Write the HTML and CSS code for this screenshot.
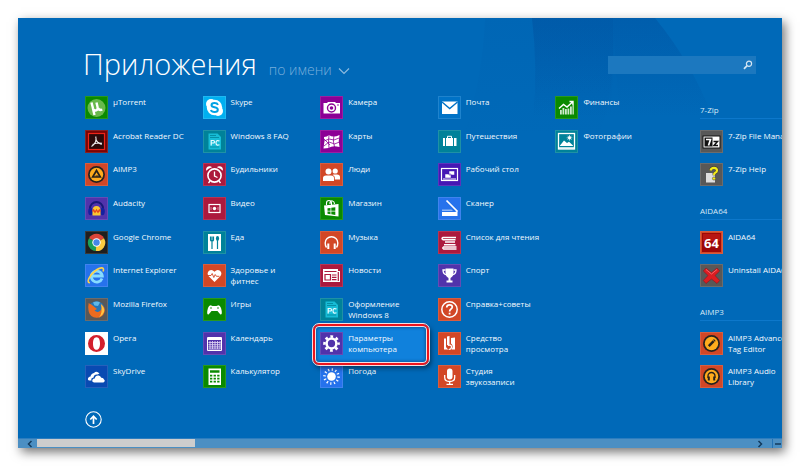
FILE: index.html
```html
<!DOCTYPE html>
<html lang="ru">
<head>
  <meta charset="UTF-8">
  <meta name="viewport" content="width=device-width, initial-scale=1">
  <title>Приложения</title>
  <link rel="stylesheet" href="styles.css">
</head>
<body>
  <div class="screen">
    <svg class="wallpaper" viewBox="0 0 764 430" preserveAspectRatio="xMidYMin slice" aria-hidden="true">
      <defs>
        <linearGradient id="fade" x1="0" y1="0" x2="0" y2="1">
          <stop offset="0" stop-color="#004a98" stop-opacity=".3"/>
          <stop offset="1" stop-color="#004a98" stop-opacity="0"/>
        </linearGradient>
      </defs>
      <path d="M467 0H595Q599 70 580 120H445Q465 60 467 0Z" fill="url(#fade)" opacity=".3"/>
      <path d="M514 0H637Q674 45 695 100H515Q520 50 514 0Z" fill="url(#fade)"/>
      <path d="M514 0H595Q596 60 592 100H515Q520 50 514 0Z" fill="url(#fade)" opacity=".5"/>
      <path d="M595 0H637Q674 45 695 100H602Q597 50 595 0Z" fill="url(#fade)" opacity=".3"/>
    </svg>

    <header class="header">
      <h1 class="title">Приложения</h1>
      <div class="sort">
        <select class="sort-select" aria-label="Сортировка">
          <option>по имени</option>
        </select>
        <svg class="chevron" viewBox="0 0 12 8" aria-hidden="true"><path d="M1 1.5 6 6.5 11 1.5" fill="none" stroke="#8dbbdf" stroke-width="1.2"/></svg>
      </div>
      <form class="search">
        <input class="search-input" type="text" aria-label="Поиск">
        <button class="search-btn" type="button" aria-label="Найти">
          <svg viewBox="0 0 10 10" aria-hidden="true"><circle cx="6" cy="3.8" r="2.6" fill="none" stroke="#d4e5f3" stroke-width="1.2"/><path d="M4.1 5.7 1 8.8" stroke="#d4e5f3" stroke-width="1.7"/></svg>
        </button>
      </form>
    </header>

    <main class="content">
      <nav class="apps" aria-label="Приложения">
        <a class="app" href="#"><span class="icon green"><svg viewBox="0 0 23 23"><circle cx="11.5" cy="12" r="9" fill="#69b94c"/><path d="M6.500 6.500 8 12.500q.8 2.500 3.200 1.800 2-.700 1.400-3L11.500 6.500M12.600 11.500q1.200 3.200 4.700 2.200M7.800 12 9.500 19" fill="none" stroke="#fff" stroke-width="2.400"/></svg></span><span class="label">µTorrent</span></a>
        <a class="app" href="#"><span class="icon maroon"><svg viewBox="0 0 23 23"><rect x="3.500" y="3.500" width="16" height="16" fill="#2b0a0a" stroke="#ee2418" stroke-width="1.200"/><path d="M10.700 6.500q1 3-.2 5.500T6.500 16.500M10.700 9q1.500 4 6 5.500M7.500 14.500q4-2 9.500-1.300" fill="none" stroke="#eee" stroke-width="1.100"/></svg></span><span class="label">Acrobat Reader DC</span></a>
        <a class="app" href="#"><span class="icon orange"><svg viewBox="0 0 23 23"><circle cx="11.500" cy="11.500" r="8.500" fill="#282320"/><circle cx="11.500" cy="11.500" r="6.700" fill="#ffac1d"/><path d="M11.500 7.500 15.300 14H7.700Z" fill="none" stroke="#28211b" stroke-width="1.700"/><path d="M10.500 13h3" stroke="#28211b"/></svg></span><span class="label">AIMP3</span></a>
        <a class="app" href="#"><span class="icon purple"><svg viewBox="0 0 23 23"><path d="M5 14V11.500a6.500 6.500 0 0 1 13 0V14" fill="none" stroke="#171879" stroke-width="2"/><ellipse cx="5.500" cy="14.500" rx="2.300" ry="3.700" fill="#1420a0"/><ellipse cx="17.500" cy="14.500" rx="2.300" ry="3.700" fill="#1420a0"/><path d="M7.500 18.500v-5q0-4.500 4-4.500t4 4.500v5Z" fill="#fbc832"/><path d="M7.500 14.500 8.700 13 10 15.300 11.500 13 13 15.300 14.300 13 15.500 14.500" fill="none" stroke="#e8431f" stroke-width="1.300"/></svg></span><span class="label">Audacity</span></a>
        <a class="app" href="#"><span class="icon black"><svg viewBox="0 0 23 23"><path d="M11.500 11.500 4 7.200A8.500 8.500 0 0 1 19 7.200Z" fill="#dc4539"/><path d="M11.500 11.500 4 7.200A8.500 8.500 0 0 0 10.800 20Z" fill="#1b9f59"/><path d="M11.500 11.500 19 7.200A8.500 8.500 0 0 1 10.800 20Z" fill="#fccb40"/><circle cx="11.500" cy="11.500" r="4.200" fill="#fff"/><circle cx="11.500" cy="11.500" r="3.200" fill="#4687e8"/></svg></span><span class="label">Google Chrome</span></a>
        <a class="app" href="#"><span class="icon blue"><svg viewBox="0 0 23 23"><path d="M17 14.500A5.500 5.500 0 1 1 17.300 12H7.500" fill="none" stroke="#86dbff" stroke-width="2.800"/><path d="M5 18.500C1 19.500 4 11.500 10 7S20 3 18 7.500" fill="none" stroke="#fbd14a" stroke-width="1.600"/></svg></span><span class="label">Internet Explorer</span></a>
        <a class="app" href="#"><span class="icon gray"><svg viewBox="0 0 23 23"><circle cx="11.500" cy="11.200" r="8" fill="#2576b7"/><path d="M8 4.500q4-2 7 0L13 8 9.500 7.500Z" fill="#60b8e8"/><path d="M3.700 5q1 1 2.300 1.300L9.500 9 12 11l-2.500 1.500q2.500 2.500 5.500.5 3-2.500.500-7Q21 9 19.500 14a8.200 8.200 0 0 1-15.800-.5Q2.700 9 3.700 5Z" fill="#ed6b1e"/><path d="M16 6q4 4 3 8-1.500 4-5 5.500 4-5 2-13.500Z" fill="#ffc540"/></svg></span><span class="label">Mozilla Firefox</span></a>
        <a class="app" href="#"><span class="icon white"><svg viewBox="0 0 23 23"><path fill-rule="evenodd" d="M11.500 3a8.500 8.500 0 1 0 0 17 8.500 8.500 0 1 0 0-17ZM11.500 5.200c2.500 0 3.500 2.800 3.500 6.300s-1 6.300-3.500 6.300S8 15 8 11.500s1-6.300 3.500-6.300Z" fill="#d3202d"/></svg></span><span class="label">Opera</span></a>
        <a class="app" href="#"><span class="icon navy"><svg viewBox="0 0 23 23"><path d="M4 15.500Q2 14.500 3.500 12.500 4.500 11.500 5.500 11.500 6 8.500 9 8q2.500-2.500 5.500.5l-2 1Q9 9 8.500 12.500 5.500 13 6.500 15.500Z" fill="#fff"/><path d="M9 17.500q-2.500-.5-1.500-2.700.7-1.300 2.200-1.300.8-3.500 4-2.900 1.800.3 2.500 2.200 2.300-.3 2.600 1.500 1.500.7.700 2.200-.5 1-1.500 1Z" fill="#fff"/></svg></span><span class="label">SkyDrive</span></a>

        <a class="app" href="#"><span class="icon skype"><svg viewBox="0 0 23 23"><circle cx="8" cy="8" r="5" fill="#fff"/><circle cx="15" cy="15" r="5" fill="#fff"/><circle cx="11.500" cy="11.500" r="7.700" fill="#fff"/><path d="M15 8.800Q14.200 7 11.500 7 8.500 7 8.500 9.200q0 1.500 3 2.100 3.300.7 3.300 2.400 0 2.300-3.200 2.300-3 0-3.700-2" fill="none" stroke="#00a2e4" stroke-width="2"/></svg></span><span class="label">Skype</span></a>
        <a class="app" href="#"><span class="icon teal"><svg viewBox="0 0 23 23"><path d="M5.500 3.500h9l3.500 3.500v12.500h-12.500Z" fill="#17bcd6"/><path d="M7 5.500h6M7 7.500h9M7 17h9" stroke="#058fa6"/><path d="M8.200 15.500V10.500h2q1.300 0 1.300 1.300T10.200 13H8.200M16.500 11q-3.500-1.500-3.500 1.800 0 3.300 3.500 1.900" fill="none" stroke="#e8fbff" stroke-width="1.200"/></svg></span><span class="label">Windows 8 FAQ</span></a>
        <a class="app" href="#"><span class="icon crimson"><svg viewBox="0 0 23 23"><circle cx="11.500" cy="12.500" r="6.600" fill="none" stroke="#fff" stroke-width="1.600"/><path d="M11.500 8.500v4.500l3 1.500M7 18l-1.500 2M16 18l1.500 2" fill="none" stroke="#fff" stroke-width="1.300"/><path d="M3.200 7.700Q2.500 4 6 3.200q2.200-.2 3 1Q5 5.300 3.200 7.700ZM19.800 7.700Q20.500 4 17 3.200q-2.200-.2-3 1Q18 5.300 19.800 7.700Z" fill="#fff"/></svg></span><span class="label">Будильники</span></a>
        <a class="app" href="#"><span class="icon crimson"><svg viewBox="0 0 23 23"><rect x="6" y="7.500" width="11" height="8" fill="none" stroke="#fff" stroke-width="1.200"/><circle cx="11.500" cy="11.500" r="1.700" fill="#fff"/><path d="M8 10v3M15 10v3" stroke="#e9b8c4" stroke-width=".7"/></svg></span><span class="label">Видео</span></a>
        <a class="app" href="#"><span class="icon teal"><svg viewBox="0 0 23 23"><rect x="5" y="3" width="13" height="17" fill="#fff"/><path d="M7.500 5.500v3.500q0 1 1.500 1v8M10.500 5.500v3.500q0 1-1.500 1M9 5.500v5M14.500 9v9" fill="none" stroke="#008299" stroke-width="1.200"/><ellipse cx="14.500" cy="7.500" rx="1.600" ry="2.400" fill="#008299"/></svg></span><span class="label">Еда</span></a>
        <a class="app" href="#"><span class="icon orange"><svg viewBox="0 0 23 23"><path d="M11.500 18 5.500 12Q3.500 9 6 6.800q3-1.800 5.500 1 2.500-2.800 5.500-1Q19.500 9 17.500 12Z" fill="#fff"/><path d="M4 11.500h4l1.200-2 1.600 4 1.400-3 1.200 1.800h3" fill="none" stroke="#d24726" stroke-width=".9"/></svg></span><span class="label">Здоровье и<br>фитнес</span></a>
        <a class="app" href="#"><span class="icon green"><svg viewBox="0 0 23 23"><path d="M7.500 7.200 9.500 8h4l2-.8q1.500 0 2.500 2.800.8 2.500.8 5 0 2-1.600 1.200-1.600-1.600-2.700-3.200H8.500Q7.400 14.600 5.800 16.200 4.200 17 4.200 15q0-2.500.8-5 1-2.800 2.500-2.800Z" fill="#fff"/><circle cx="8" cy="10" r=".8" fill="#0a8a00"/><circle cx="15" cy="10" r=".8" fill="#0a8a00"/></svg></span><span class="label">Игры</span></a>
        <a class="app" href="#"><span class="icon purple"><svg viewBox="0 0 23 23"><path d="M4.500 5.500h14v13h-14Z" fill="none" stroke="#fff"/><path d="M4.500 7h14" stroke="#fff" stroke-width="2"/><path d="M7 9v8M9.500 9v8M12 9v8M14.500 9v8M17 9v8M5.500 10.500h12M5.500 12.700h12M5.500 14.900h12M5.500 17h12" stroke="#d9cff0" stroke-width=".9"/></svg></span><span class="label">Календарь</span></a>
        <a class="app" href="#"><span class="icon green"><svg viewBox="0 0 23 23"><rect x="5.500" y="3.500" width="12.500" height="16.500" fill="#fff"/><path d="M7 6.500h9.500" stroke="#0a8a00" stroke-width="2.500"/><path d="M7 10.700h9.500M7 13.700h9.500M7 16.700h9.500" stroke="#0a8a00" stroke-width="1.700" stroke-dasharray="2.300 1.300"/></svg></span><span class="label">Калькулятор</span></a>

        <a class="app" href="#"><span class="icon magenta"><svg viewBox="0 0 23 23"><path d="M3.500 7h4V6h8v1h4.500v10.500h-16.500Z" fill="#fff"/><circle cx="11.500" cy="12" r="4" fill="none" stroke="#8c0095" stroke-width="1.400"/><circle cx="11.500" cy="12" r="1.800" fill="#8c0095"/><circle cx="18" cy="9" r=".8" fill="#8c0095"/></svg></span><span class="label">Камера</span></a>
        <a class="app" href="#"><span class="icon magenta"><svg viewBox="0 0 23 23"><path d="M4 7q3 0 5-2 4 3 10.500 0-1.500 6 0 12-7-2-11 1-2 0-5 .5Q5 12 4 7Z" fill="#fff"/><path d="M9 5q-1 6 0 13M14 5q-1.500 6 .5 12M4 11l5-2 5 1 5-2M4 16l5-4 5.500 2 5-2M4 9l6 6" fill="none" stroke="#8c0095" stroke-width=".8"/></svg></span><span class="label">Карты</span></a>
        <a class="app" href="#"><span class="icon orange"><svg viewBox="0 0 23 23"><circle cx="8.500" cy="8.500" r="3" fill="#fff"/><path d="M3 18v-3q0-2.500 3-2.500h5q3 0 3 2.500v3Z" fill="#fff"/><circle cx="15.200" cy="8" r="2.600" fill="#fff"/><path d="M14.800 16.500v-2q0-2-2.300-2.500l1-.5h3.500q3 0 3 2.500v2.500Z" fill="#fff"/></svg></span><span class="label">Люди</span></a>
        <a class="app" href="#"><span class="icon green"><svg viewBox="0 0 23 23"><path d="M4 8.500 18.500 7v12.500L5 18Z" fill="#fff"/><path d="M6.500 8V6q0-2.500 2.500-2.500T11.500 6v2M10 7V5.500q.5-2 2.500-1.500T14.500 7" fill="none" stroke="#fff" stroke-width="1.100"/><path d="m7.500 11.300 3-.4v2.800h-3ZM11.300 10.800l4-.6v3.500h-4ZM7.500 14.400h3v2.800l-3-.4ZM11.300 14.400h4v3.500l-4-.6Z" fill="#0a8a00"/></svg></span><span class="label">Магазин</span></a>
        <a class="app" href="#"><span class="icon orange"><svg viewBox="0 0 23 23"><path d="M6.500 16.500q-1.300-1.500-1.300-4.500a6.300 6.300 0 0 1 12.600 0q0 3-1.300 4.500" fill="none" stroke="#fff" stroke-width="1.400"/><path d="M8.300 12.500v5.500M14.700 12.500v5.500" stroke="#fff" stroke-width="2"/></svg></span><span class="label">Музыка</span></a>
        <a class="app" href="#"><span class="icon crimson"><svg viewBox="0 0 23 23"><path d="M3 5h15v2h2v11H3Z" fill="#fff"/><path d="M4.500 7.500h12M5 10.500h5.500v5.500H5ZM12 11h4.500M12 13.300h4.500M12 15.600h4.500M18.300 8v9" fill="none" stroke="#ac193d" stroke-width="1.200"/></svg></span><span class="label">Новости</span></a>
        <a class="app" href="#"><span class="icon teal"><svg viewBox="0 0 23 23"><path d="M5.500 3.500h9l3.500 3.500v12.500h-12.500Z" fill="#17bcd6"/><path d="M7 5.500h6M7 7.500h9M7 17h9" stroke="#058fa6"/><path d="M8.200 15.500V10.500h2q1.300 0 1.300 1.300T10.200 13H8.200M16.500 11q-3.500-1.500-3.500 1.800 0 3.300 3.500 1.900" fill="none" stroke="#e8fbff" stroke-width="1.200"/></svg></span><span class="label">Оформление<br>Windows 8</span></a>
        <a class="app selected" href="#"><span class="icon purple"><svg viewBox="0 0 23 23"><circle cx="11.500" cy="11.500" r="4.900" fill="none" stroke="#fff" stroke-width="2.500"/><circle cx="11.500" cy="11.500" r="7" fill="none" stroke="#fff" stroke-width="2.600" stroke-dasharray="2.750 2.750" stroke-dashoffset="1.370"/></svg></span><span class="label">Параметры<br>компьютера</span></a>
        <a class="app" href="#"><span class="icon blue"><svg viewBox="0 0 23 23"><circle cx="11.500" cy="11.500" r="4.300" fill="#fff"/><circle cx="11.500" cy="11.500" r="7" fill="none" stroke="#fff" stroke-width="2.600" stroke-dasharray="1.200 2.465"/></svg></span><span class="label">Погода</span></a>

        <a class="app" href="#"><span class="icon mail"><svg viewBox="0 0 23 23"><path d="M4 5.500h15.500v12.500H4Z" fill="#fff"/><path d="m4 6 7.700 6.500L19.500 6" fill="none" stroke="#0072c6" stroke-width="1.400"/></svg></span><span class="label">Почта</span></a>
        <a class="app" href="#"><span class="icon teal"><svg viewBox="0 0 23 23"><path d="M5 8h2v8H5ZM8 8h7v8H8ZM16 8h2.500v8H16Z" fill="#fff"/><path d="M9.500 8V6.300h4V8" fill="none" stroke="#fff"/></svg></span><span class="label">Путешествия</span></a>
        <a class="app" href="#"><span class="icon violet"><svg viewBox="0 0 23 23"><rect x="3.500" y="5.500" width="16" height="12" fill="none" stroke="#fff" stroke-width="1.200"/><path d="M5 16h13" stroke="#fff"/><path d="M11 8h5.500v4H11ZM7 11h6v4H7Z" fill="#fff" stroke="#4617b4" stroke-width=".5"/></svg></span><span class="label">Рабочий стол</span></a>
        <a class="app" href="#"><span class="icon blue"><svg viewBox="0 0 23 23"><path d="m8.500 3.500 11 11" stroke="#fff" stroke-width="1.700"/><path d="M4 12.500 13.500 12.500 15 14H4Z" fill="#8db7f6"/><path d="M4 15h13l2.500-1V19H4Z" fill="#fff"/></svg></span><span class="label">Сканер</span></a>
        <a class="app" href="#"><span class="icon crimson"><svg viewBox="0 0 23 23"><path d="M18 6.500H5Q3 7.500 5 8.700h12.500M7 11h10M6 13.700h11.500M18.500 16H5.500Q4 17 5.500 18h13" fill="none" stroke="#fff" stroke-width="1.400"/></svg></span><span class="label">Список для чтения</span></a>
        <a class="app" href="#"><span class="icon purple"><svg viewBox="0 0 23 23"><path d="M7.500 4.500h8v4q0 4-3 5.500v2.500h2V18.500h-6v-2h2V14q-3-1.500-3-5.500Z" fill="#fff"/><path d="M7.500 6H5q0 4 3.500 5M15.500 6H18q0 4-3.500 5" fill="none" stroke="#fff" stroke-width="1.300"/></svg></span><span class="label">Спорт</span></a>
        <a class="app" href="#"><span class="icon orange"><svg viewBox="0 0 23 23"><circle cx="11.500" cy="11.500" r="7.700" fill="none" stroke="#fff" stroke-width="1.500"/><path d="M8.700 9.500q0-2.700 2.900-2.700 2.700 0 2.700 2.300 0 1.200-1.500 2.100-1.200.8-1.200 2.200" fill="none" stroke="#fff" stroke-width="1.700"/><path d="M10.700 14.700h1.800v1.800h-1.800Z" fill="#fff"/></svg></span><span class="label">Справка+советы</span></a>
        <a class="app" href="#"><span class="icon orange"><svg viewBox="0 0 23 23"><path d="M6 6.500h2v8.500q1 2 3.500 2.500H6Z" fill="#fff"/><path d="M9 4.500 11.500 4v9.500L9 13ZM13 6l4-.500V17.500h-3.500Q16 14 13 11.500Z" fill="#fff"/><path d="M10 13.500q3.500-1 3.500 1.500 0 2-2.500 2.500" fill="none" stroke="#fff" stroke-width="1.200"/></svg></span><span class="label">Средство<br>просмотра</span></a>
        <a class="app" href="#"><span class="icon orange"><svg viewBox="0 0 23 23"><rect x="9" y="3.500" width="5.500" height="11" rx="2.700" fill="#fff"/><path d="M6.700 10v2.500q0 4 5 4t5-4V10M11.700 16.500v3M8.500 19.300h6.500" fill="none" stroke="#fff" stroke-width="1.300"/></svg></span><span class="label">Студия<br>звукозаписи</span></a>

        <a class="app" href="#"><span class="icon green"><svg viewBox="0 0 23 23"><path d="M5 14h1.800v4.500H5ZM7.500 12h1.800v6.500H7.500ZM10 13h1.800v5.500H10ZM12.500 12.500h1.800v6h-1.800ZM15 10.500h1.800v8H15ZM17.500 9h1.300v9.500h-1.300Z" fill="#cfe9cc"/><path d="m4 12.500 4.500-4 3.500 2.500L17.500 6M14.500 5.500h3.500V9" fill="none" stroke="#fff" stroke-width="1.400"/></svg></span><span class="label">Финансы</span></a>
        <a class="app" href="#"><span class="icon teal"><svg viewBox="0 0 23 23"><rect x="3.500" y="3.500" width="16" height="15.500" fill="none" stroke="#fff" stroke-width="1.300"/><path d="m5 15.500 4-5 3 2.500 2-1.200 4 3.700v.500H5Z" fill="#fff"/><path d="M4 18h15.500" stroke="#fff" stroke-width="1.500"/><circle cx="14.500" cy="7.800" r="1.500" fill="#fff"/><path d="M14.500 5v5.600M11.700 7.800h5.600M12.500 5.800l4 4M16.500 5.800l-4 4" stroke="#fff" stroke-width=".6"/></svg></span><span class="label">Фотографии</span></a>
      </nav>

      <nav class="groups" aria-label="Программы">
        <h2 class="group-name">7-Zip</h2>
        <a class="app" href="#"><span class="icon gray"><svg viewBox="0 0 23 23"><rect x="3" y="6" width="17" height="12" fill="#fff" stroke="#111"/><path d="M4.500 7.500h8v9h-8Z" fill="#111"/><path d="M6 9.500h4.500L8.500 15.500" fill="none" stroke="#fff" stroke-width="1.700"/><path d="M13.500 11.500h4l-3.500 4h4" fill="none" stroke="#111" stroke-width="1.500"/></svg></span><span class="label">7-Zip File Manager</span></a>
        <a class="app" href="#"><span class="icon gray"><svg viewBox="0 0 23 23"><path d="M6 10h6l3 2.500v7H6Z" fill="#dedede"/><path d="M10.500 7.500q.5-2.700 3.500-2.700t3 2.700q0 1.500-1.800 2.300-1.200.7-1.200 2.500" fill="none" stroke="#333" stroke-width="3"/><path d="M10.500 7.500q.5-2.700 3.500-2.700t3 2.700q0 1.500-1.800 2.300-1.200.7-1.200 2.500" fill="none" stroke="#f3ea17" stroke-width="2.200"/><circle cx="14" cy="15.500" r="1.600" fill="#f3ea17" stroke="#333" stroke-width=".5"/></svg></span><span class="label">7-Zip Help</span></a>
        <h2 class="group-name">AIDA64</h2>
        <a class="app" href="#"><span class="icon orange"><svg viewBox="0 0 23 23"><rect x="2" y="2" width="19" height="19" fill="#9c0808"/><path d="M3 3h17v7H3Z" fill="#b81613"/><text class="icon-number" x="11.500" y="16.500" text-anchor="middle">64</text></svg></span><span class="label">AIDA64</span></a>
        <a class="app" href="#"><span class="icon gray"><svg viewBox="0 0 23 23"><path d="M6 4 11.500 8.500 17 4 19.700 7 15 11.500 19.700 16.500 17 19.500 11.500 15 6 19.500 3.300 16.500 8 11.500 3.300 7Z" fill="#dc1d21" stroke="#861014" stroke-width=".5"/><path d="m6 5.500 5.500 4.500L17 5.500" fill="none" stroke="#f3686b" stroke-width="1"/></svg></span><span class="label">Uninstall AIDA64</span></a>
        <h2 class="group-name">AIMP3</h2>
        <a class="app" href="#"><span class="icon orange"><svg viewBox="0 0 23 23"><circle cx="11.500" cy="11.500" r="8.500" fill="#282320"/><circle cx="11.500" cy="11.500" r="6.700" fill="#ffac1d"/><path d="m8.800 14.200 4.800-5" stroke="#28211b" stroke-width="2.500"/><path d="m14 8.800.8-.8" stroke="#28211b" stroke-width="2.500"/></svg></span><span class="label">AIMP3 Advanced<br>Tag Editor</span></a>
        <a class="app" href="#"><span class="icon orange"><svg viewBox="0 0 23 23"><circle cx="11.500" cy="11.500" r="8.500" fill="#282320"/><circle cx="11.500" cy="11.500" r="6.700" fill="#ffac1d"/><path d="M8 13v-2a3.500 3.500 0 0 1 7 0v2" fill="none" stroke="#28211b" stroke-width="1.300"/><path d="M8.800 11.500v4M14.200 11.500v4" stroke="#28211b" stroke-width="2"/></svg></span><span class="label">AIMP3 Audio<br>Library</span></a>
      </nav>
    </main>

    <footer class="footer">
      <button class="up-btn" type="button" aria-label="Наверх">
        <svg viewBox="0 0 17 17" aria-hidden="true"><circle cx="8.500" cy="8.500" r="7.700" fill="none" stroke="#fff" stroke-width="1.100"/><path d="M8.500 13V5.500M5.300 8.500 8.500 5.200l3.200 3.300" fill="none" stroke="#fff" stroke-width="1.700"/></svg>
      </button>
    </footer>

    <div class="scrollbar">
      <button class="scroll-btn scroll-left" type="button" aria-label="Влево"><svg viewBox="0 0 6 8" aria-hidden="true"><path d="M4.500 1 1.500 4l3 3" fill="none" stroke="#123a5c" stroke-width="1.500"/></svg></button>
      <div class="scroll-track"><div class="scroll-thumb"></div></div>
      <button class="scroll-btn scroll-right" type="button" aria-label="Вправо"><svg viewBox="0 0 6 8" aria-hidden="true"><path d="m1.500 1 3 3-3 3" fill="none" stroke="#123a5c" stroke-width="1.500"/></svg></button>
      <button class="scroll-btn zoom-out" type="button" aria-label="Уменьшить"><svg viewBox="0 0 6 8" aria-hidden="true"><path d="M0 4h6" stroke="#123a5c" stroke-width="1.500"/></svg></button>
    </div>
  </div>
</body>
</html>
```

FILE: styles.css
```css
* {
  box-sizing: border-box;
}

body {
  margin: 0;
  padding: 18px;
  background: #fff;
  color: #fff;
  font-family: "Open Sans", "Noto Sans", sans-serif;
}

button {
  padding: 0;
  border: 0;
  background: none;
  cursor: pointer;
}

svg {
  display: block;
}

.screen {
  position: relative;
  display: flex;
  flex-direction: column;
  min-height: calc(100vh - 36px);
  background: #0069b8;
  box-shadow: 3px 4px 10px rgba(0, 0, 0, 0.55);
}

.wallpaper {
  position: absolute;
  inset: 0;
  width: 100%;
  height: 100%;
}

/* Header */
.header {
  position: relative;
  display: flex;
  align-items: baseline;
  padding: 24px 26px 0 65px;
}

.title {
  margin: 0;
  font-size: 29px;
  font-weight: 300;
  line-height: 44px;
}

.sort {
  display: flex;
  align-items: baseline;
  gap: 6px;
  margin-left: 12px;
}

.sort-select {
  appearance: none;
  padding: 0;
  border: 0;
  background: none;
  color: #79aedb;
  font: 300 14px/20px "Open Sans", "Noto Sans", sans-serif;
}

.chevron {
  width: 12px;
  height: 8px;
}

.search {
  display: flex;
  align-self: flex-start;
  width: 148px;
  height: 18px;
  margin-top: 14px;
  margin-left: auto;
  background: #1c78bf;
}

.search-input {
  flex: 1;
  min-width: 0;
  padding: 0 4px;
  border: 0;
  outline: 0;
  background: none;
  color: #fff;
  font-size: 10px;
}

.search-btn {
  width: 13px;
}

.search-btn svg {
  width: 10px;
  height: 10px;
}

/* App list */
.content {
  position: relative;
  display: flex;
  gap: 27px;
  height: 303px;
  margin-top: 10px;
  padding-left: 67px;
  overflow: hidden;
}

.apps,
.groups {
  display: grid;
  flex: none;
  grid-template-rows: repeat(9, 1fr);
  grid-auto-flow: column;
}

.apps {
  grid-template-columns: repeat(5, 1fr);
  width: 588px;
}

.groups {
  grid-template-columns: 120px;
}

.app {
  display: flex;
  align-items: flex-start;
  gap: 5px;
  min-height: 0;
  color: #f4f9fd;
  text-decoration: none;
}

.icon {
  flex: none;
  width: 23px;
  height: 23px;
  box-shadow: inset 0 0 0 1px rgba(255, 255, 255, 0.12);
}

.icon-number {
  fill: #fff;
  font: 700 13px "Open Sans", sans-serif;
}

.label {
  font-size: 8px;
  line-height: 11px;
  white-space: nowrap;
}

.group-name {
  margin: 0 0 11px;
  padding-top: 7px;
  border-bottom: 1px solid #0d78cb;
  color: #d6e8f6;
  font-size: 8px;
  font-weight: 400;
  line-height: 14px;
}

/* Highlighted tile with the red frame */
.selected {
  position: relative;
  z-index: 1;
}

.selected::before {
  content: "";
  position: absolute;
  z-index: -1;
  inset: -8px 9px 0 -7px;
  border: 2px solid #ee141c;
  border-radius: 6px;
  outline: 1px solid #f4dfe2;
  background: #1081dc;
  box-shadow: inset 0 0 0 1px #f4dfe2, inset 0 0 3px 2px #0a5b9f, 2px 3px 5px rgba(0, 0, 0, 0.5);
}

.green { background: #0a8a00; }
.maroon { background: #7a0505; }
.orange { background: #d24726; }
.purple { background: #5133ab; }
.violet { background: #4617b4; }
.black { background: #1f1f1f; }
.blue { background: #2672ec; }
.gray { background: #585858; }
.white { background: #fff; }
.navy { background: #094ab2; }
.skype { background: #00aff0; }
.teal { background: #008299; }
.crimson { background: #ac193d; }
.magenta { background: #8c0095; }
.mail { background: #0072c6; }

/* Bottom */
.footer {
  position: relative;
  padding: 12px 0 0 67px;
}

.up-btn {
  display: block;
  width: 17px;
  height: 17px;
}

.scrollbar {
  position: relative;
  display: flex;
  height: 10px;
  margin-top: auto;
  border-top: 1px solid #2c7dbf;
  background: #4b8fc3;
}

.scroll-btn {
  display: flex;
  align-items: center;
  justify-content: center;
}

.scroll-btn svg {
  width: 6px;
  height: 8px;
}

.scroll-left {
  width: 19px;
  padding-left: 5px;
}

.scroll-right {
  width: 24px;
}

.zoom-out {
  width: 10px;
  border-left: 1px solid #2272b5;
}

.scroll-track {
  flex: 1;
}

.scroll-thumb {
  width: 158px;
  height: 8px;
  background: #cdcdcd;
}
```
